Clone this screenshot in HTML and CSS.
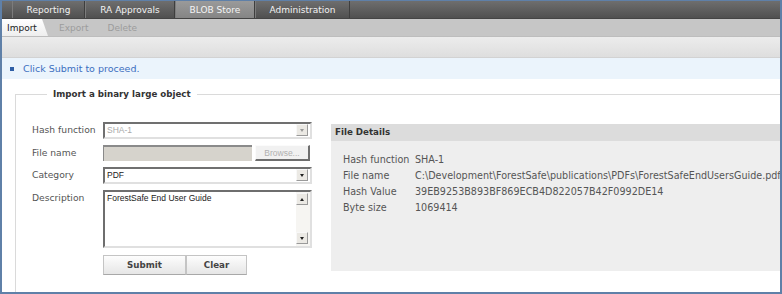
FILE: index.html
```html
<!doctype html>
<html lang="en">
   <head>
      <meta charset="UTF-8" />
      <title>BLOB Store - Import</title>
      <link rel="stylesheet" href="styles.css">
   </head>
   <body>
      <div class="frame">
         <div class="mainnav">
            <div class="tab">Reporting</div>
            <div class="tab">RA Approvals</div>
            <div class="tab active">BLOB Store</div>
            <div class="tab">Administration</div>
         </div>
         <div class="subnav">
            <div class="subtab active">Import</div>
            <div class="subtab">Export</div>
            <div class="subtab">Delete</div>
         </div>
         <div class="band"></div>
         <div class="message">
            <span class="bullet"></span>
            <span>Click Submit to proceed.</span>
         </div>
         <div class="content">
            <fieldset class="group">
               <legend>Import a binary large object</legend>
               <div class="row">
                  <div class="form">
                     <label>Hash function</label>
                     <div class="select disabled">
                        <span class="value">SHA-1</span>
                        <span class="drop"><span class="arrow"></span></span>
                     </div>
                     <label>File name</label>
                     <div class="file">
                        <span class="file-field"></span>
                        <span class="browse">Browse...</span>
                     </div>
                     <label>Category</label>
                     <div class="select">
                        <span class="value">PDF</span>
                        <span class="drop"><span class="arrow"></span></span>
                     </div>
                     <label>Description</label>
                     <div class="textarea">
                        <span class="value">ForestSafe End User Guide</span>
                        <span class="scroll">
                           <span class="drop"><span class="arrow up"></span></span>
                           <span class="drop"><span class="arrow"></span></span>
                        </span>
                     </div>
                     <span></span>
                     <div class="buttons">
                        <button class="btn submit">Submit</button>
                        <button class="btn clear">Clear</button>
                     </div>
                  </div>
                  <div class="details">
                     <div class="details-head">File Details</div>
                     <div class="details-body">
                        <div class="drow"><span class="dlabel">Hash function</span><span>SHA-1</span></div>
                        <div class="drow"><span class="dlabel">File name</span><span>C:\Development\ForestSafe\publications\PDFs\ForestSafeEndUsersGuide.pdf</span></div>
                        <div class="drow"><span class="dlabel">Hash Value</span><span>39EB9253B893BF869ECB4D822057B42F0992DE14</span></div>
                        <div class="drow"><span class="dlabel">Byte size</span><span>1069414</span></div>
                     </div>
                  </div>
               </div>
            </fieldset>
         </div>
      </div>
   </body>
</html>
```

FILE: styles.css
```css
* {
   margin: 0;
   padding: 0;
   box-sizing: border-box;
}
body {
   background: #fff;
   font-family: "DejaVu Sans", Verdana, sans-serif;
   font-size: 9.2px;
   color: #444;
   overflow: hidden;
}
.frame {
   width: 782px;
   height: 294px;
   border: 2px solid #5f80a8;
   border-top-width: 1px;
   overflow: hidden;
   background: #fff;
}
.mainnav {
   display: flex;
   height: 18px;
   padding-left: 10px;
   background: linear-gradient(#6e6e6e, #505050);
   border-bottom: 1px solid #444;
   font-size: 9px;
}
.tab {
   display: flex;
   align-items: center;
   justify-content: center;
   color: #f2f2f2;
   border-left: 1px solid #7c7c7c;
   border-right: 1px solid #3e3e3e;
   padding-top: 1px;
}
.tab:nth-child(1) { width: 73px; }
.tab:nth-child(2) { width: 90px; }
.tab:nth-child(3) { width: 80px; }
.tab:nth-child(4) { width: 95px; }
.tab.active {
   background: linear-gradient(#9a9a9a, #858585);
   color: #f4f4f4;
}
.subnav {
   display: flex;
   height: 18px;
   background: #c6c6c6;
   border-bottom: 1px solid #bdbdbd;
   font-size: 9px;
}
.subtab {
   display: flex;
   align-items: center;
   padding: 0 11px 0 8px;
   color: #9c9c9c;
}
.subtab.active {
   width: 46px;
   padding-left: 5px;
   color: #222;
   background: linear-gradient(#ffffff, #eeeeee);
   clip-path: polygon(0 0, 40px 0, 46px 100%, 0 100%);
   margin-right: 3px;
}
.band {
   height: 21px;
   background: linear-gradient(#ececec, #dedede);
   border-bottom: 1px solid #d2d2d2;
}
.message {
   display: flex;
   align-items: center;
   gap: 9px;
   height: 21px;
   padding-left: 8px;
   background: #ebf4fc;
   color: #3c6fbf;
   font-size: 9.5px;
}
.bullet {
   width: 4px;
   height: 4px;
   background: #2f5fa6;
}
.content {
   padding: 10px 0 0 13px;
}
.group {
   width: 900px;
   height: 220px;
   border: 1px solid #dadada;
   padding: 23px 0 0 16px;
}
.group legend {
   margin-left: 15px;
   padding: 0 6px;
   font-weight: bold;
   font-size: 8.7px;
   color: #333;
}
.row {
   display: flex;
   align-items: flex-start;
   gap: 19px;
}
.form {
   display: grid;
   grid-template-columns: 71px 209px;
   row-gap: 6px;
}
.form label {
   padding-top: 2px;
   color: #555;
}
.select {
   display: flex;
   height: 17px;
   background: #fff;
   border: 2px solid #707070;
   border-right-color: #e0e0e0;
   border-bottom-color: #e0e0e0;
}
.select .value,
.textarea .value {
   flex: 1;
   padding: 1px 0 0 2px;
   font-family: "Liberation Sans", Arial, sans-serif;
   font-size: 8.5px;
   color: #222;
}
.select.disabled .value {
   color: #aaa;
}
.drop {
   display: flex;
   align-items: center;
   justify-content: center;
   width: 12px;
   height: 12px;
   margin: 0 2px 0 0;
   background: #ebe9e4;
   border: 1px solid #f8f8f8;
   border-right-color: #9a9a9a;
   border-bottom-color: #9a9a9a;
}
.arrow {
   width: 0;
   height: 0;
   border-left: 2.5px solid transparent;
   border-right: 2.5px solid transparent;
   border-top: 3px solid #222;
}
.arrow.up {
   border-top: none;
   border-bottom: 3px solid #222;
}
.disabled .arrow {
   border-top-color: #999;
}
.file {
   display: flex;
   gap: 3px;
   height: 16px;
}
.file-field {
   width: 149px;
   background: #d6d3cc;
   border-top: 2px solid #8a8a8a;
   border-left: 1px solid #8a8a8a;
}
.browse {
   display: flex;
   align-items: center;
   justify-content: center;
   width: 55px;
   background: #f1f1f1;
   color: #b0b0b0;
   font-family: "Liberation Sans", Arial, sans-serif;
   font-size: 8.5px;
   border: 1px solid #fbfbfb;
   border-right: 2px solid #6e6e6e;
   border-bottom: 2px solid #6e6e6e;
}
.textarea {
   display: flex;
   height: 58px;
   background: #fff;
   border: 2px solid #6e6e6e;
   border-right-color: #e0e0e0;
   border-bottom-color: #e0e0e0;
}
.scroll {
   display: flex;
   flex-direction: column;
   justify-content: space-between;
   padding: 1px 0 2px;
   background: #f6f5f2;
}
.buttons {
   display: flex;
   margin-top: 1px;
}
.btn {
   height: 20px;
   font-family: "DejaVu Sans", Verdana, sans-serif;
   font-size: 8.7px;
   font-weight: bold;
   color: #444;
   background: linear-gradient(#fdfdfd, #e6e6e6);
   border: 1px solid #c4c4c4;
   border-bottom-color: #a8a8a8;
}
.btn.submit { width: 83px; }
.btn.clear { width: 61px; }
.details {
   width: 460px;
   height: 147px;
   margin-top: 2px;
   background: #eeeeee;
}
.details-head {
   height: 17px;
   padding: 3px 0 0 4px;
   background: #dcdcdc;
   font-weight: bold;
   font-size: 8.7px;
   color: #333;
}
.details-body {
   padding: 10px 0 0 12px;
   font-size: 9.6px;
}
.drow {
   display: flex;
   height: 16px;
   align-items: center;
   color: #555;
}
.dlabel {
   width: 72px;
}
```
